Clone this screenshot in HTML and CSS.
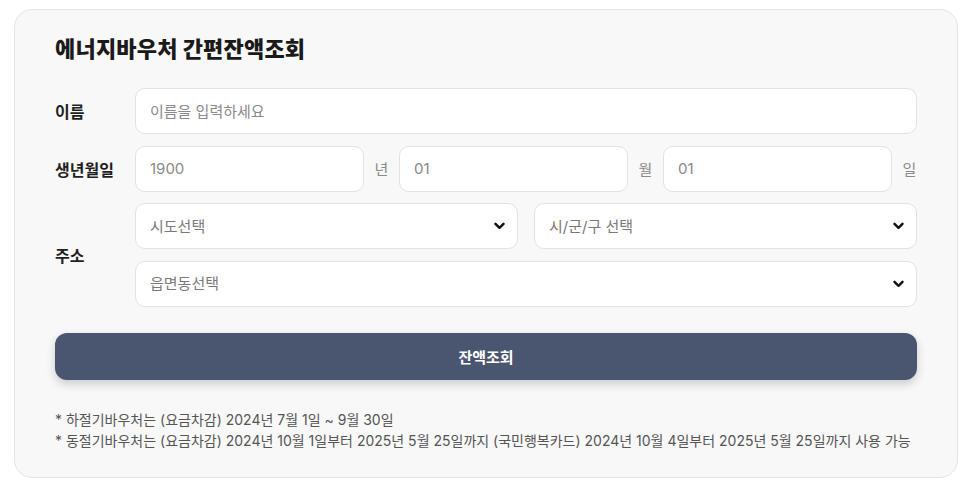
FILE: index.html
```html
<!DOCTYPE html>
<html lang="ko">
<head>
<meta charset="utf-8">
<title>에너지바우처 간편잔액조회</title>
<link rel="stylesheet" href="styles.css">
</head>
<body>
<div class="card">
  <h1 class="title">에너지바우처 간편잔액조회</h1>
  <div class="form">
    <div class="row">
      <div class="label">이름</div>
      <div class="field"><input class="input" type="text" placeholder="이름을 입력하세요"></div>
    </div>
    <div class="row">
      <div class="label">생년월일</div>
      <div class="field birth">
        <input class="input" type="text" placeholder="1900"><span class="unit">년</span>
        <input class="input" type="text" placeholder="01"><span class="unit">월</span>
        <input class="input" type="text" placeholder="01"><span class="unit">일</span>
      </div>
    </div>
    <div class="row">
      <div class="label">주소</div>
      <div class="field addr">
        <div class="sel-row">
          <div class="sel">
            <select class="select"><option>시도선택</option></select>
            <svg class="chev" width="11" height="8" viewBox="0 0 11 8"><path d="M1.5 1.8 L5.5 5.8 L9.5 1.8" fill="none" stroke="#111" stroke-width="2.4" stroke-linecap="round" stroke-linejoin="round"/></svg>
          </div>
          <div class="sel">
            <select class="select"><option>시/군/구 선택</option></select>
            <svg class="chev" width="11" height="8" viewBox="0 0 11 8"><path d="M1.5 1.8 L5.5 5.8 L9.5 1.8" fill="none" stroke="#111" stroke-width="2.4" stroke-linecap="round" stroke-linejoin="round"/></svg>
          </div>
        </div>
        <div class="sel">
          <select class="select"><option>읍면동선택</option></select>
          <svg class="chev" width="11" height="8" viewBox="0 0 11 8"><path d="M1.5 1.8 L5.5 5.8 L9.5 1.8" fill="none" stroke="#111" stroke-width="2.4" stroke-linecap="round" stroke-linejoin="round"/></svg>
        </div>
      </div>
    </div>
  </div>
  <button class="btn" type="button">잔액조회</button>
  <div class="notes">
    <p>* 하절기바우처는 (요금차감) 2024년 7월 1일 ~ 9월 30일</p>
    <p>* 동절기바우처는 (요금차감) 2024년 10월 1일부터 2025년 5월 25일까지 (국민행복카드) 2024년 10월 4일부터 2025년 5월 25일까지 사용 가능</p>
  </div>
</div>
</body>
</html>
```
FILE: styles.css
```css
* { box-sizing: border-box; }
body {
  margin: 0;
  background: #ffffff;
  font-family: "Inter", "Noto Sans CJK KR", sans-serif;
  color: #222;
}
.card {
  margin: 9px 0 0 14px;
  width: 944px;
  height: 469px;
  background: #f8f8f8;
  border: 1px solid #e4e4e4;
  border-radius: 18px;
  padding: 25px 40px 0 40px;
}
.title {
  margin: 0;
  font-size: 22px;
  line-height: 28px;
  font-weight: 800;
  color: #1a1a1a;
  letter-spacing: 0.2px;
}
.form {
  margin-top: 25px;
  display: flex;
  flex-direction: column;
  gap: 11.5px;
}
.row {
  display: flex;
  align-items: center;
}
.label {
  width: 80px;
  flex: none;
  font-size: 16px;
  font-weight: 700;
  color: #1f1f1f;
}
.field {
  flex: 1;
  min-width: 0;
}
.input, .select {
  width: 100%;
  height: 46px;
  border: 1px solid #e2e2e2;
  border-radius: 10px;
  background: #fff;
  padding: 0 14px;
  font-family: inherit;
  font-size: 15px;
  color: #333;
  outline: none;
}
.input::placeholder { color: #8a8a8a; }
.birth {
  display: flex;
  align-items: center;
  gap: 10px;
}
.birth .input { flex: 1; min-width: 0; }
.unit {
  flex: none;
  width: 15px;
  font-size: 15px;
  color: #8a8a8a;
  text-align: center;
}
.addr {
  display: flex;
  flex-direction: column;
  gap: 11.5px;
}
.sel-row {
  display: flex;
  gap: 16px;
}
.sel-row .sel { flex: 1; }
.sel { position: relative; }
.select {
  appearance: none;
  -webkit-appearance: none;
  color: #7a7a7a;
  cursor: pointer;
}
.chev {
  position: absolute;
  right: 13px;
  top: 19px;
  pointer-events: none;
}
.btn {
  display: block;
  width: 100%;
  height: 47px;
  margin-top: 26px;
  border: none;
  border-radius: 12px;
  background: #4a5570;
  color: #fff;
  font-family: inherit;
  font-size: 15px;
  font-weight: 700;
  box-shadow: 0 4px 10px rgba(0, 0, 0, 0.18);
}
.notes {
  margin-top: 29px;
  font-size: 14px;
  line-height: 21px;
  color: #555;
  white-space: nowrap;
}
.notes p { margin: 0; }
```
